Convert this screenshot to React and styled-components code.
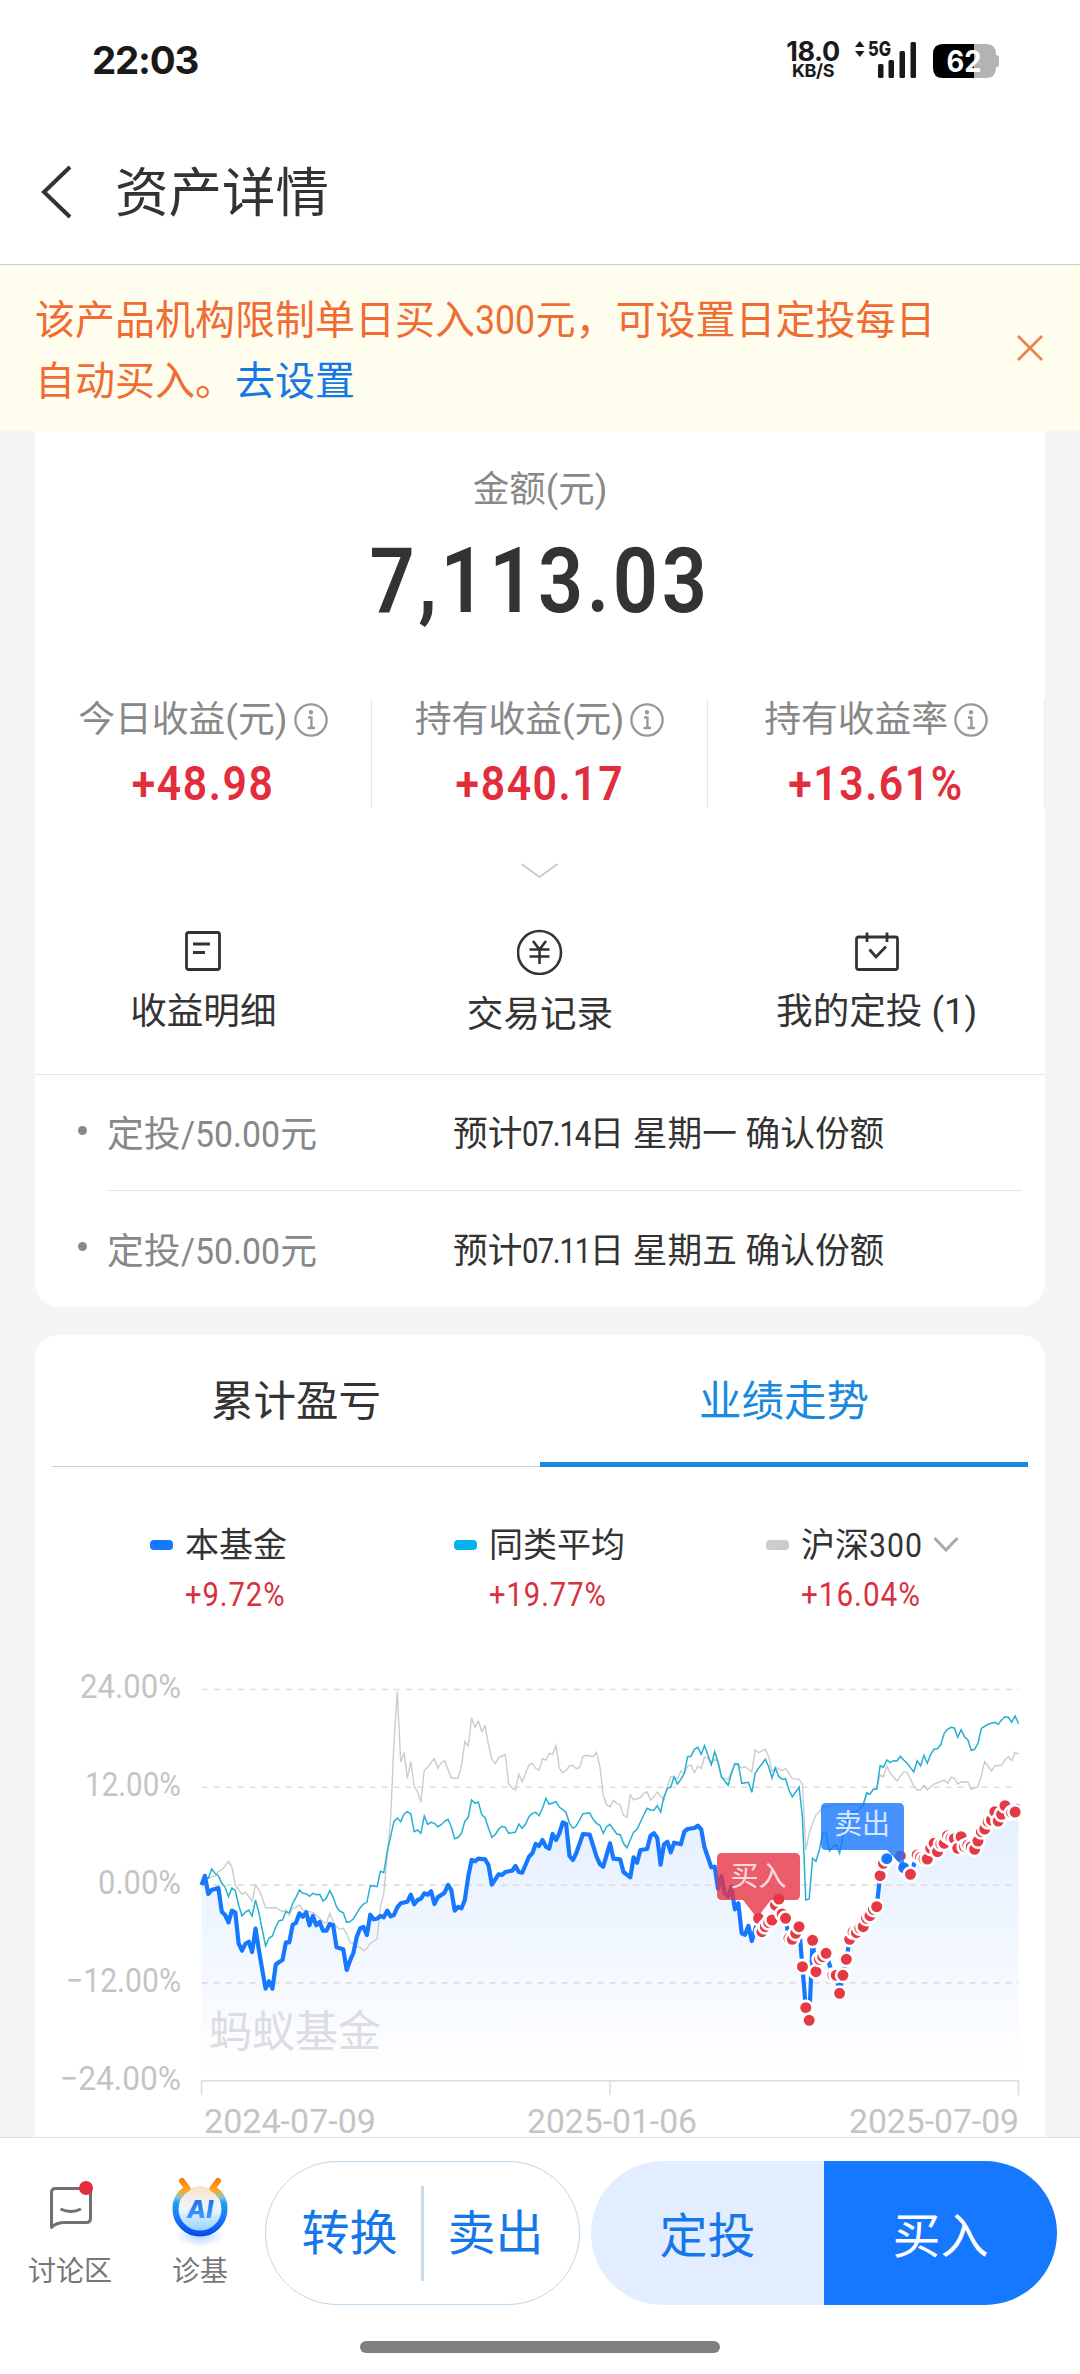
import styled, { createGlobalStyle } from 'styled-components';

const GlobalStyle = createGlobalStyle`
  * {
    box-sizing: border-box;
  }

  body {
    margin: 0;
    background: #f5f5f5;
    color: #333;
    font-family: Roboto, 'Noto Sans CJK SC', sans-serif;
  }
`;

const Page = styled.div`
  display: flex;
  flex-direction: column;
  width: 1080px;
  height: 2374px;
  overflow: hidden;
`;

/* narrow figures used for every amount */
const Num = styled.span`
  display: inline-block;
  font-weight: ${(p) => p.$weight || 400};
  letter-spacing: ${(p) => p.$spacing ?? 0.033}em;
  line-height: 1;
  transform: scaleX(${(p) => p.$x || 0.87});
  transform-origin: ${(p) => p.$origin || 'center'};
  margin-right: ${(p) => p.$pull || 0}px;
`;

const StatusBar = styled.div`
  display: flex;
  justify-content: space-between;
  height: 118px;
  padding: 36px 81px 0 92px;
  background: #fff;
  color: #1a1a1a;
  font-family: Inter, sans-serif;
`;

const Clock = styled.div`
  font-size: 38.5px;
  font-weight: 700;
  line-height: 48px;
  letter-spacing: -1.2px;
`;

const StatusRight = styled.div`
  display: flex;
`;

const Speed = styled.div`
  display: flex;
  flex-direction: column;
  align-items: center;
  width: 54px;
  margin-right: 13px;
  padding-top: 3px;
  font-size: 27px;
  font-weight: 700;
  line-height: 25px;
  letter-spacing: -0.4px;
`;

const SpeedUnit = styled.span`
  font-size: 18px;
  line-height: 14px;
`;

const Header = styled.div`
  display: flex;
  align-items: center;
  height: 147px;
  padding: 0 0 1px 40px;
  background: #fff;
  border-bottom: 1px solid #ccc;

  svg {
    margin-top: 3px;
  }
`;

const Title = styled.div`
  margin: -5px 0 0 41px;
  font-size: 53.5px;
`;

const Notice = styled.div`
  display: flex;
  align-items: center;
  justify-content: space-between;
  height: 166px;
  padding: 0 37px 0 35px;
  background: #fffdee;
  color: #ef6c35;
  font-size: 40px;
  line-height: 61px;
`;

const NoticeText = styled.div`
  width: 920px;
  padding-top: 5px;
`;

const Link = styled.span`
  color: #1677e6;
`;

const Content = styled.div`
  flex: 1;
  min-height: 0;
  overflow: hidden;
  padding: 0 35px;
`;

const Card = styled.div`
  background: #fff;
  border-radius: ${(p) => p.$radius};
  margin-bottom: 28px;
`;

const Balance = styled.div`
  display: flex;
  flex-direction: column;
  align-items: center;
  height: 268px;
  padding-top: 31px;
  color: #888;
  font-size: 36.5px;
  line-height: 56px;
`;

const Amount = styled.div`
  margin-top: 8px;
  color: #333;
  font-size: 91px;
  line-height: 110px;
`;

const Stats = styled.div`
  display: grid;
  grid-template-columns: repeat(3, 1fr);
  height: 104px;
`;

const Stat = styled.div`
  display: flex;
  flex-direction: column;
  align-items: center;
  border-right: 1px solid #e8e8e8;
`;

const StatLabel = styled.div`
  display: flex;
  align-items: center;
  gap: 6px;
  height: 42px;
  color: #888;
  font-size: 36.8px;
  line-height: 34px;
  white-space: nowrap;
`;

const StatValue = styled.div`
  margin-top: 18px;
  color: #e12d3c;
  font-size: 49px;
  line-height: 44px;
`;

const Expand = styled.div`
  display: flex;
  justify-content: center;
  height: 126px;
  padding-top: 57px;
`;

const Actions = styled.div`
  display: grid;
  grid-template-columns: repeat(3, 1fr);
  height: 146px;
  border-bottom: 1px solid #e5e5e5;
`;

const Action = styled.div`
  display: flex;
  flex-direction: column;
  align-items: center;
  gap: ${(p) => p.$gap || 13}px;
  font-size: 36.6px;
  line-height: 48px;

  svg {
    flex: none;
  }
`;

const Plan = styled.div`
  display: flex;
  align-items: center;
  height: 116px;
  margin-right: 23px;
  padding-left: 43px;
`;

const Bullet = styled.i`
  width: 9px;
  height: 9px;
  margin: -6px 20px 0 0;
  border-radius: 50%;
  background: #888;
`;

const PlanBody = styled.div`
  display: flex;
  align-items: center;
  flex: 1;
  height: 100%;
  padding-bottom: 3px;
  border-bottom: ${(p) => (p.$last ? 'none' : '1px solid #e5e5e5')};
`;

const PlanName = styled.div`
  width: 346px;
  color: #888;
  font-size: 36.8px;
`;

const PlanDate = styled.div`
  font-size: 34.7px;
  white-space: nowrap;
`;

const Tabs = styled.div`
  display: flex;
  height: 132px;
  margin: 0 17px;
`;

const Tab = styled.div`
  flex: 1;
  text-align: center;
  font-size: 42.5px;
  line-height: 134px;
  color: ${(p) => (p.$active ? '#1a8ae0' : '#333')};
  box-shadow: inset 0 ${(p) => (p.$active ? '-5px #1a8ae0' : '-1px #ccc')};
`;

const Legend = styled.div`
  display: flex;
  height: 193px;
  padding: 54px 0 0 115px;
`;

const LegendItem = styled.div`
  display: grid;
  grid-template-columns: 35px auto;
  align-items: center;
  align-content: start;
  width: ${(p) => p.$width}px;
`;

const Mark = styled.i`
  width: 23px;
  height: 10px;
  border-radius: 4px;
  background: ${(p) => p.$color};
`;

const LegendName = styled.div`
  display: flex;
  align-items: center;
  height: 48px;
  font-size: 34px;
  line-height: 44px;
`;

const LegendValue = styled.div`
  grid-column: 2;
  height: 52px;
  color: #d9303e;
  font-size: 33.5px;
  line-height: 52px;
`;

const Chart = styled.svg`
  display: block;
`;

const BottomBar = styled.div`
  display: flex;
  flex-direction: column;
  align-items: center;
  height: 237px;
  background: #fff;
  border-top: 1px solid #e0e0e0;
`;

const BarRow = styled.div`
  display: flex;
  align-self: stretch;
  height: 203px;
  padding: 23px 23px 0 5px;
`;

const Shortcut = styled.div`
  display: flex;
  flex-direction: column;
  align-items: center;
  justify-content: space-between;
  width: ${(p) => p.$width}px;
  height: 129px;
  padding-top: 16px;
  color: #777;
  font-size: 28px;
  line-height: 36px;
`;

const OutlinePill = styled.div`
  display: flex;
  align-items: center;
  width: 315px;
  height: 144px;
  border: 1px solid #bcd8ee;
  border-radius: 72px;
`;

const SolidPill = styled.div`
  display: flex;
  width: 466px;
  height: 144px;
  margin-left: 11px;
  border-radius: 72px;
  overflow: hidden;
`;

const PillButton = styled.div`
  flex: 1;
  padding-${(p) => p.$side || 'left'}: ${(p) => p.$pad || 0}px;
  text-align: center;
  font-size: 48px;
  line-height: 151px;
  color: ${(p) => p.$color || '#1677e8'};
  background: ${(p) => p.$bg || 'none'};
`;

const PillDivider = styled.i`
  width: 3px;
  height: 95px;
  background: #c5dcee;
`;

const HomeBar = styled.div`
  width: 360px;
  height: 12px;
  border-radius: 6px;
  background: #808080;
`;

// [trading day, height] pairs, height in thirds of a pixel from the chart top
const FUND = [
  0, 675, 1, 648, 2, 702, 3, 690, 5, 684, 6, 755, 7, 765, 8, 787, 9, 752, 10, 757, 11, 850, 12, 872,
  13, 851, 14, 845, 15, 876, 16, 806, 17, 870, 18, 930, 19, 986, 20, 964, 21, 986, 22, 914, 23, 906,
  24, 900, 25, 847, 26, 847, 27, 794, 28, 788, 29, 760, 30, 770, 31, 757, 32, 796, 33, 768, 34, 796,
  35, 786, 36, 812, 37, 812, 38, 792, 39, 796, 40, 862, 41, 865, 42, 868, 43, 930, 44, 902, 45, 878,
  46, 830, 47, 805, 48, 801, 49, 825, 50, 764, 51, 778, 52, 776, 53, 768, 54, 772, 55, 752, 56, 769,
  57, 765, 58, 742, 59, 730, 61, 725, 62, 704, 63, 733, 64, 720, 65, 716, 66, 700, 67, 704, 68, 694,
  69, 732, 70, 712, 72, 698, 73, 675, 74, 690, 75, 752, 76, 741, 77, 745, 78, 720, 79, 650, 80, 600,
  81, 604, 82, 596, 84, 598, 85, 615, 86, 674, 88, 643, 89, 645, 90, 636, 92, 632, 93, 618, 94, 636,
  95, 638, 97, 590, 98, 580, 99, 552, 100, 558, 101, 540, 102, 560, 103, 566, 104, 522, 105, 540,
  106, 520, 107, 487, 108, 492, 109, 588, 110, 600, 111, 580, 113, 522, 115, 524, 117, 590, 118, 612,
  119, 620, 121, 550, 122, 596, 124, 598, 125, 636, 127, 652, 128, 592, 129, 608, 130, 570, 132, 567,
  133, 527, 134, 520, 135, 534, 136, 614, 137, 553, 138, 545, 139, 577, 140, 548, 142, 553, 143, 515,
  144, 507, 146, 504, 147, 497, 148, 508, 149, 562, 151, 622, 152, 620, 153, 686, 154, 648, 155, 700,
  156, 710, 157, 680, 158, 748, 159, 730, 160, 820, 161, 824, 162, 798, 163, 843,
];

const BUYS = [
  165, 775, 166, 815, 167, 800, 168, 788, 169, 780, 170, 735, 171, 717, 172, 762, 173, 775, 174, 835,
  175, 838, 176, 820, 177, 800, 178, 920, 179, 1043, 180, 1081, 181, 841, 182, 935, 183, 898, 184, 890,
  185, 880, 187, 946, 188, 946, 189, 1000, 190, 946, 191, 898, 192, 838, 193, 816, 194, 818, 195, 804,
  196, 800, 197, 775, 198, 767, 199, 748, 200, 740, 201, 647, 202, 610, 203, 596, 207, 588, 208, 623,
  210, 643, 212, 585, 213, 592, 214, 597, 215, 597, 216, 565, 217, 550, 218, 575, 219, 552, 220, 550,
  221, 527, 222, 534, 223, 536, 224, 565, 225, 530, 226, 560, 227, 555, 228, 560, 229, 568, 230, 543,
  231, 515, 232, 507, 233, 485, 234, 480, 235, 455, 236, 483, 237, 463, 238, 437, 240, 458, 241, 456,
];

// days on which part of the holding was sold
const SELL_DAYS = [203, 208];

const PEERS = [
  0, 675, 1, 652, 2, 655, 3, 627, 4, 640, 5, 648, 6, 670, 7, 682, 8, 710, 9, 684, 10, 692, 11, 735,
  12, 768, 13, 756, 14, 750, 15, 768, 16, 720, 17, 758, 18, 810, 19, 858, 20, 834, 21, 828, 22, 800,
  23, 782, 24, 780, 25, 755, 26, 758, 27, 730, 28, 712, 29, 690, 30, 700, 31, 701, 32, 709, 33, 700,
  34, 704, 35, 703, 36, 723, 37, 714, 38, 692, 39, 712, 40, 740, 41, 754, 42, 758, 43, 787, 44, 785,
  45, 776, 46, 760, 47, 743, 48, 732, 49, 727, 50, 677, 51, 678, 52, 680, 53, 634, 54, 638, 55, 575,
  56, 530, 57, 485, 58, 474, 59, 485, 60, 462, 61, 455, 62, 462, 63, 515, 64, 510, 65, 520, 66, 468,
  67, 493, 68, 487, 69, 490, 70, 500, 71, 494, 72, 484, 73, 478, 74, 500, 75, 536, 76, 532, 77, 520,
  78, 484, 79, 472, 80, 420, 81, 430, 82, 426, 83, 464, 84, 473, 85, 505, 86, 532, 87, 524, 88, 508,
  89, 499, 90, 502, 91, 520, 92, 518, 93, 516, 94, 492, 95, 505, 96, 492, 97, 470, 98, 460, 99, 457,
  100, 467, 101, 445, 102, 415, 103, 433, 105, 425, 106, 442, 107, 448, 108, 458, 109, 490, 110, 505,
  111, 498, 113, 461, 115, 459, 116, 478, 117, 490, 118, 496, 119, 520, 120, 500, 121, 493, 122, 508,
  123, 522, 124, 524, 125, 550, 126, 563, 127, 540, 128, 517, 129, 508, 131, 465, 132, 445, 133, 450,
  134, 451, 135, 437, 136, 456, 137, 410, 138, 385, 139, 381, 140, 350, 141, 372, 142, 358, 143, 340,
  144, 290, 145, 289, 146, 268, 147, 262, 148, 283, 149, 257, 150, 285, 151, 314, 152, 275, 153, 305,
  154, 350, 156, 376, 157, 340, 158, 311, 159, 312, 160, 370, 162, 367, 163, 397, 164, 340, 165, 325,
  166, 312, 167, 298, 168, 320, 169, 354, 170, 324, 171, 350, 172, 358, 173, 356, 174, 390, 175, 410,
  177, 381, 178, 470, 179, 720, 180, 717, 181, 595, 182, 604, 183, 570, 184, 520, 185, 520, 186, 573,
  187, 560, 188, 555, 189, 580, 190, 530, 191, 490, 192, 470, 193, 455, 194, 455, 196, 435, 197, 398,
  198, 403, 199, 388, 200, 388, 201, 317, 202, 322, 203, 300, 204, 308, 205, 302, 206, 303, 207, 289,
  208, 300, 209, 310, 211, 336, 212, 302, 213, 317, 214, 286, 215, 310, 216, 283, 217, 268, 218, 266,
  219, 253, 220, 220, 221, 208, 222, 202, 223, 204, 224, 232, 225, 209, 226, 230, 227, 240, 228, 271,
  229, 268, 230, 250, 231, 205, 233, 193, 235, 187, 236, 193, 237, 180, 238, 170, 239, 172, 240, 187,
  241, 168, 242, 191,
];

const CSI300 = [
  0, 675, 2, 655, 4, 648, 5, 634, 6, 630, 7, 618, 8, 604, 9, 622, 10, 675, 11, 690, 12, 703, 13, 697,
  15, 723, 16, 674, 17, 690, 18, 713, 19, 743, 22, 743, 24, 755, 25, 750, 26, 766, 27, 745, 28, 742,
  29, 735, 30, 750, 33, 757, 35, 775, 36, 785, 37, 790, 38, 760, 39, 785, 40, 800, 41, 808, 42, 805,
  43, 822, 44, 848, 45, 850, 46, 860, 47, 862, 48, 873, 49, 865, 50, 850, 51, 843, 52, 836, 53, 740,
  54, 700, 55, 590, 56, 480, 57, 250, 58, 95, 59, 306, 60, 278, 61, 355, 62, 304, 63, 378, 64, 395,
  65, 427, 66, 330, 67, 322, 68, 308, 69, 296, 70, 325, 71, 308, 72, 302, 74, 354, 76, 354, 77, 318,
  78, 245, 79, 258, 80, 173, 81, 202, 82, 183, 83, 214, 84, 198, 85, 255, 86, 297, 87, 311, 88, 293,
  89, 288, 90, 284, 91, 372, 92, 385, 93, 390, 94, 343, 95, 365, 96, 340, 97, 315, 98, 310, 99, 325,
  100, 331, 101, 296, 102, 300, 103, 280, 104, 283, 105, 257, 106, 325, 107, 338, 108, 331, 109, 318,
  110, 316, 111, 326, 112, 323, 113, 289, 114, 286, 116, 290, 117, 277, 118, 320, 119, 405, 120, 434,
  121, 440, 122, 421, 123, 430, 124, 434, 125, 466, 126, 472, 127, 404, 128, 420, 130, 412, 131, 400,
  132, 396, 133, 420, 134, 410, 135, 397, 137, 420, 138, 380, 139, 350, 141, 357, 142, 333, 143, 342,
  144, 318, 145, 315, 146, 338, 147, 318, 148, 325, 149, 290, 150, 295, 151, 311, 152, 297, 153, 305,
  154, 353, 156, 358, 157, 335, 158, 310, 160, 324, 161, 320, 163, 336, 164, 270, 165, 278, 167, 268,
  168, 290, 169, 335, 170, 322, 172, 332, 173, 326, 174, 340, 175, 356, 177, 358, 178, 373, 179, 570,
  180, 520, 181, 490, 182, 465, 183, 455, 184, 440, 186, 440, 188, 433, 194, 432, 196, 435, 197, 405,
  198, 400, 199, 388, 200, 385, 201, 345, 202, 350, 203, 318, 204, 340, 206, 363, 208, 335, 209, 338,
  211, 378, 212, 390, 213, 390, 214, 376, 215, 390, 217, 372, 220, 360, 221, 370, 222, 352, 223, 354,
  224, 372, 225, 366, 227, 366, 228, 388, 230, 380, 231, 345, 232, 305, 234, 332, 235, 318, 237, 316,
  238, 300, 239, 290, 240, 302, 241, 277, 242, 283,
];

const LEFT = 166.5;
const RIGHT = 983.5;

const toPoints = (flat) => {
  const points = [];
  for (let i = 0; i < flat.length; i += 2) {
    points.push({
      day: flat[i],
      x: LEFT + (flat[i] * (RIGHT - LEFT)) / 242,
      y: flat[i + 1] / 3,
    });
  }
  return points;
};

const toLine = (points) => points.map((p) => `${p.x.toFixed(1)},${p.y.toFixed(1)}`).join(' ');

const buys = toPoints(BUYS);
const fund = [...toPoints(FUND), ...buys, ...toPoints([242, 433])];
const fundLine = toLine(fund);

const AXIS = [
  { label: '24.00%', width: 101 },
  { label: '12.00%', width: 96 },
  { label: '0.00%', width: 83 },
  { label: '−12.00%', width: 115 },
  { label: '−24.00%', width: 121 },
];

function Trend() {
  return (
    <Chart width="1010" height="480" viewBox="0 0 1010 480">
      <defs>
        <linearGradient id="area" gradientUnits="userSpaceOnUse" x1="0" y1="160" x2="0" y2="421">
          <stop offset="0" stopColor="#1677ff" stopOpacity="0.11" />
          <stop offset="1" stopColor="#1677ff" stopOpacity="0" />
        </linearGradient>
      </defs>
      <polygon points={`${LEFT},421 ${fundLine} ${RIGHT},421`} fill="url(#area)" />
      {AXIS.map((tick, i) => (
        <g key={tick.label}>
          <path
            d={`M${LEFT} ${29.5 + i * 97.8}H${RIGHT}`}
            stroke="#ddd"
            strokeWidth="1.6"
            strokeDasharray="6 6"
          />
          <text
            x="146"
            y={38.3 + i * 97.8}
            textAnchor="end"
            textLength={tick.width}
            lengthAdjust="spacingAndGlyphs"
            fontSize="32.5"
            fill="#c4c4c4"
          >
            {tick.label}
          </text>
        </g>
      ))}
      <path
        d={`M${LEFT} 435V420.7H${RIGHT}V435M575 421V435`}
        fill="none"
        stroke="#ddd"
        strokeWidth="1.5"
      />
      <g fontSize="32.5" fill="#c4c4c4">
        <text x="169" y="472.5" textLength="172" lengthAdjust="spacingAndGlyphs">2024-07-09</text>
        <text x="492" y="472.5" textLength="170" lengthAdjust="spacingAndGlyphs">2025-01-06</text>
        <text x="814" y="472.5" textLength="170" lengthAdjust="spacingAndGlyphs">2025-07-09</text>
      </g>
      <text x="174" y="387" fontSize="43" fill="#dcdde0">蚂蚁基金</text>
      <polyline points={toLine(toPoints(CSI300))} fill="none" stroke="#ccc" strokeWidth="1.4" />
      <polyline points={toLine(toPoints(PEERS))} fill="none" stroke="#25b0d3" strokeWidth="1.5" />
      <polyline
        points={fundLine}
        fill="none"
        stroke="#1677ff"
        strokeWidth="4.2"
        strokeLinejoin="round"
      />
      {buys.map((p) => (
        <circle
          key={p.day}
          cx={p.x}
          cy={p.y}
          r="6.8"
          fill={SELL_DAYS.includes(p.day) ? '#1677ff' : '#e63946'}
          stroke="#fff"
          strokeWidth="2.6"
        />
      ))}
      <g fillOpacity="0.8" fontSize="28" textAnchor="middle">
        <path
          d="M687 193H760Q765 193 765 198V235Q765 240 760 240H736L722 258L708 240H687Q682 240 682 235V198Q682 193 687 193Z"
          fill="#e63546"
        />
        <text x="723.5" y="226" fill="#fff">买入</text>
        <path
          d="M791 143H864Q869 143 869 148V208L852 190H791Q786 190 786 185V148Q786 143 791 143Z"
          fill="#1677ff"
        />
        <text x="827" y="174" fill="#fff">卖出</text>
      </g>
    </Chart>
  );
}

function InfoIcon() {
  return (
    <svg width="34" height="34" viewBox="0 0 34 34" fill="none" stroke="#999" strokeWidth="2.4">
      <circle cx="17" cy="17" r="15.6" />
      <path d="M14 14.5H17.4V25M13.5 25H21" />
      <circle cx="17" cy="9.3" r="1" fill="#999" />
    </svg>
  );
}

function StatusIcons() {
  return (
    <svg width="146" height="48" viewBox="0 0 146 48">
      <path d="M2 11L6.8 5L11.5 11ZM2 15L6.8 21L11.5 15Z" fill="#1a1a1a" />
      <text x="15" y="20" fontSize="20" fontWeight="800" textLength="23" lengthAdjust="spacingAndGlyphs" fill="#1a1a1a">5G</text>
      <g fill="#1a1a1a">
        <rect x="25" y="28" width="5.5" height="14" rx="1.5" />
        <rect x="35.5" y="24" width="5.5" height="18" rx="1.5" />
        <rect x="46.5" y="15" width="5.5" height="27" rx="1.5" />
        <rect x="57.5" y="6" width="5.5" height="36" rx="1.5" />
      </g>
      <path d="M121 8H133Q143 8 143 18V19Q146 19 146 22V28Q146 31 143 31V32Q143 42 133 42H121Z" fill="#b3b3b3" />
      <path d="M121 8H90Q80 8 80 18V32Q80 42 90 42H121Z" fill="#000" />
      <text x="111" y="36" textAnchor="middle" fontSize="30" fontWeight="700" textLength="35" lengthAdjust="spacingAndGlyphs" fill="#fff">62</text>
    </svg>
  );
}

function ReceiptIcon() {
  return (
    <svg width="46" height="46" viewBox="0 0 46 46" fill="none" stroke="#333" strokeWidth="2.8">
      <rect x="6.5" y="3.5" width="33" height="37" rx="2" />
      <path d="M13 15H30M13 23.5H25" />
    </svg>
  );
}

function YenIcon() {
  return (
    <svg width="46" height="46" viewBox="0 0 46 46" fill="none" stroke="#333" strokeWidth="2.6">
      <circle cx="22.5" cy="23.5" r="21.5" />
      <path d="M16 12L22.5 20.5L29 12M12.5 20.5H32.5M12.5 27.5H32.5M22.5 20.5V35" />
    </svg>
  );
}

function CalendarIcon() {
  return (
    <svg width="46" height="46" viewBox="0 0 46 46" fill="none" stroke="#333" strokeWidth="2.8">
      <rect x="2.5" y="8" width="41" height="32.5" rx="2" />
      <path d="M13 3.5V13M33 3.5V13M15.5 20.5L22 28L32 17.5" />
    </svg>
  );
}

function ChatIcon() {
  return (
    <svg width="50" height="64" viewBox="0 0 50 64">
      <path
        d="M6.5 50.5V15.5Q6.5 11.5 10.5 11.5H41.5Q45.5 11.5 45.5 15.5V41Q45.5 45.5 41.5 45.5H20Q11 45.5 6.5 50.5Z"
        fill="none"
        stroke="#707070"
        strokeWidth="3"
        strokeLinejoin="round"
      />
      <path d="M15.5 32Q26 37 36 32" fill="none" stroke="#707070" strokeWidth="2.8" />
      <circle cx="41" cy="11" r="7" fill="#e12d3c" />
    </svg>
  );
}

function AiIcon() {
  return (
    <svg width="60" height="72" viewBox="0 0 60 72">
      <defs>
        <linearGradient id="ring" gradientUnits="userSpaceOnUse" x1="0" y1="3" x2="0" y2="58">
          <stop offset="0" stopColor="#f97f12" />
          <stop offset="0.2" stopColor="#fdab28" />
          <stop offset="0.32" stopColor="#7cc6d8" />
          <stop offset="0.42" stopColor="#1b9df2" />
          <stop offset="0.7" stopColor="#1677ff" />
          <stop offset="1" stopColor="#0b4be6" />
        </linearGradient>
        <linearGradient id="face" x1="0" y1="0" x2="0" y2="1">
          <stop offset="0" stopColor="#f8e2c8" />
          <stop offset="0.5" stopColor="#eef6ff" />
          <stop offset="1" stopColor="#8fd0ff" />
        </linearGradient>
        <linearGradient id="ai" x1="0" y1="0" x2="0" y2="1">
          <stop offset="0" stopColor="#1263f0" />
          <stop offset="1" stopColor="#45a6ff" />
        </linearGradient>
        <radialGradient id="glow">
          <stop offset="0" stopColor="#1677ff" stopOpacity="0.35" />
          <stop offset="1" stopColor="#1677ff" stopOpacity="0" />
        </radialGradient>
      </defs>
      <ellipse cx="30" cy="58" rx="24" ry="12" fill="url(#glow)" />
      <circle cx="30" cy="32" r="23" fill="url(#face)" />
      <path
        d="M12 4L17.5 11.500Q5.500 18 5.500 32A24.500 24.500 0 0 0 54.500 32Q54.500 18 42.500 11.500L48 4"
        fill="none"
        stroke="url(#ring)"
        strokeWidth="6"
        strokeLinecap="round"
        strokeLinejoin="round"
      />
      <text x="30" y="40.5" textAnchor="middle" fontFamily="Inter, sans-serif" fontSize="25" fontWeight="800" fontStyle="italic" fill="url(#ai)">AI</text>
    </svg>
  );
}

const STATS = [
  { label: '今日收益(元)', value: '+48.98' },
  { label: '持有收益(元)', value: '+840.17' },
  { label: '持有收益率', value: '+13.61%' },
];

const PLANS = [
  { date: '07.14', rest: '日 星期一 确认份额' },
  { date: '07.11', rest: '日 星期五 确认份额' },
];

export default function App() {
  return (
    <Page>
      <GlobalStyle />
      <StatusBar>
        <Clock>22:03</Clock>
        <StatusRight>
          <Speed>
            18.0
            <SpeedUnit>KB/S</SpeedUnit>
          </Speed>
          <StatusIcons />
        </StatusRight>
      </StatusBar>
      <Header>
        <svg width="34" height="56" viewBox="0 0 34 56" fill="none" stroke="#333" strokeWidth="4">
          <path d="M30 3L4 28L30 53" />
        </svg>
        <Title>资产详情</Title>
      </Header>
      <Notice>
        <NoticeText>
          该产品机构限制单日买入<Num $origin="left" $x={0.89} $spacing={0} $pull={-7}>300</Num>元，可设置日定投每日自动买入。
          <Link>去设置</Link>
        </NoticeText>
        <svg width="26" height="26" viewBox="0 0 26 26" stroke="#ef7f4a" strokeWidth="2.6">
          <path d="M1 1L25 25M25 1L1 25" />
        </svg>
      </Notice>
      <Content>
        <Card $radius="0 0 24px 24px">
          <Balance>
            金额(元)
            <Amount>
              <Num $weight={600} $spacing={0.045}>7,113.03</Num>
            </Amount>
          </Balance>
          <Stats>
            {STATS.map((s) => (
              <Stat key={s.label}>
                <StatLabel>
                  {s.label}
                  <InfoIcon />
                </StatLabel>
                <StatValue>
                  <Num $weight={600} $spacing={0.038}>{s.value}</Num>
                </StatValue>
              </Stat>
            ))}
          </Stats>
          <Expand>
            <svg width="40" height="20" viewBox="0 0 40 20" fill="none" stroke="#ccc" strokeWidth="2">
              <path d="M1.5 4L19.5 17L37.5 4" />
            </svg>
          </Expand>
          <Actions>
            <Action>
              <ReceiptIcon />
              收益明细
            </Action>
            <Action $gap={16}>
              <YenIcon />
              交易记录
            </Action>
            <Action>
              <CalendarIcon />
              我的定投 (1)
            </Action>
          </Actions>
          {PLANS.map((plan, i) => (
            <Plan key={plan.date}>
              <Bullet />
              <PlanBody $last={i === PLANS.length - 1}>
                <PlanName>
                  定投<Num $origin="left" $x={0.92} $spacing={0} $pull={-8}>/50.00</Num>元
                </PlanName>
                <PlanDate>
                  预计<Num $origin="left" $x={0.85} $spacing={-0.04} $pull={-13}>{plan.date}</Num>
                  {plan.rest}
                </PlanDate>
              </PlanBody>
            </Plan>
          ))}
        </Card>
        <Card $radius="24px 24px 0 0">
          <Tabs>
            <Tab>累计盈亏</Tab>
            <Tab $active>业绩走势</Tab>
          </Tabs>
          <Legend>
            <LegendItem $width={304}>
              <Mark $color="#1677ff" />
              <LegendName>本基金</LegendName>
              <LegendValue>
                <Num $origin="left">+9.72%</Num>
              </LegendValue>
            </LegendItem>
            <LegendItem $width={312}>
              <Mark $color="#00b4ee" />
              <LegendName>同类平均</LegendName>
              <LegendValue>
                <Num $origin="left">+19.77%</Num>
              </LegendValue>
            </LegendItem>
            <LegendItem $width={220}>
              <Mark $color="#ccc" />
              <LegendName>
                沪深<Num $origin="left" $x={0.89} $pull={3}>300</Num>
                <svg width="26" height="18" viewBox="0 0 26 18" fill="none" stroke="#aaa" strokeWidth="3">
                  <path d="M1.5 2L13 14L24.5 2" />
                </svg>
              </LegendName>
              <LegendValue>
                <Num $origin="left" $x={0.885}>+16.04%</Num>
              </LegendValue>
            </LegendItem>
          </Legend>
          <Trend />
        </Card>
      </Content>
      <BottomBar>
        <BarRow>
          <Shortcut $width={130}>
            <ChatIcon />
            讨论区
          </Shortcut>
          <Shortcut $width={130}>
            <AiIcon />
            诊基
          </Shortcut>
          <OutlinePill>
            <PillButton $side="left" $pad={12}>转换</PillButton>
            <PillDivider />
            <PillButton $side="right" $pad={12}>卖出</PillButton>
          </OutlinePill>
          <SolidPill>
            <PillButton $bg="#e2eeff">定投</PillButton>
            <PillButton $bg="#1677ff" $color="#fff">买入</PillButton>
          </SolidPill>
        </BarRow>
        <HomeBar />
      </BottomBar>
    </Page>
  );
}
